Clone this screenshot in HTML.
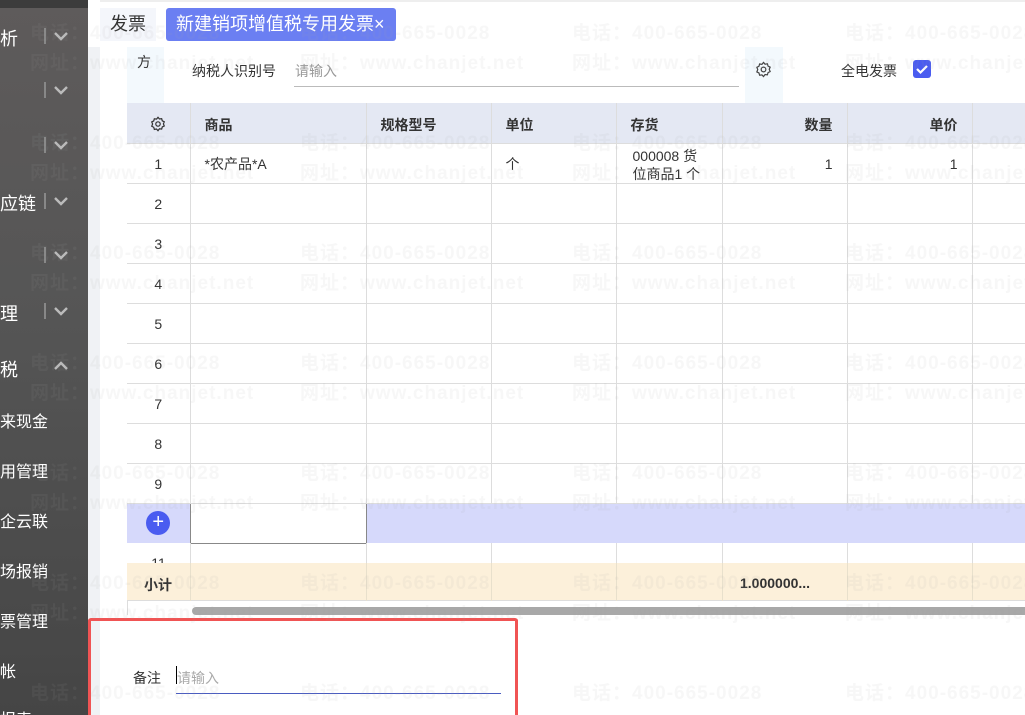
<!DOCTYPE html>
<html><head><meta charset="utf-8">
<style>
*{margin:0;padding:0;box-sizing:border-box}
html,body{width:1025px;height:715px;overflow:hidden}
body{background:#fff;font-family:"Liberation Sans","Noto Sans CJK SC",sans-serif;position:relative;font-size:14px;color:#333}
.side{position:absolute;left:0;top:0;width:88px;height:715px;background:linear-gradient(180deg,#5e5b5b 0%,#555 45%,#454545 100%)}
.side .top{position:absolute;left:0;top:0;width:88px;height:8px;background:#3c3c3c}
.si{position:absolute;left:0;color:#fff;font-size:18px}
.sep{position:absolute;left:44px;width:2px;height:16px;background:#888}
.chev{position:absolute;left:54px;width:14px;height:10px}
.strip{position:absolute;left:88px;top:47px;width:12px;height:668px;background:#f0f2f5}
.tab1{position:absolute;left:100px;top:8px;width:56px;height:33px;background:#f4f6fb;font-size:18px;color:#333;line-height:33px;text-align:center}
.tab2{position:absolute;left:166px;top:8px;width:230px;height:33px;background:#6b7ff2;border-radius:3px;color:#fff;font-size:18px;line-height:33px;padding-left:10px;white-space:nowrap}
.abs{position:absolute}
table{position:absolute;left:127px;top:103px;border-collapse:collapse;table-layout:fixed;width:905px}
td,th{border-right:1px solid #ddd;border-bottom:1px solid #ddd;height:40px;font-size:14px;padding:2px 14px 0;text-align:left;vertical-align:middle;overflow:hidden}
th{background:#e4e8f3;font-weight:bold;color:#333;padding-top:5px}
.wm{position:absolute;color:rgba(170,170,170,.09);font-size:19px;font-weight:bold;white-space:nowrap;letter-spacing:1px}
.vl{position:absolute;width:1px;background:#ddd}
</style></head><body>
<div class="side"><div class="top"></div>
<div class="si" style="top:25px">析</div><div class="sep" style="top:28px"></div>
<svg class="chev" style="top:31px" viewBox="0 0 14 10"><path d="M1 2l6 6 6-6" stroke="#bbb" stroke-width="2.4" fill="none"/></svg>
<div class="sep" style="top:82px"></div><svg class="chev" style="top:85px" viewBox="0 0 14 10"><path d="M1 2l6 6 6-6" stroke="#bbb" stroke-width="2.4" fill="none"/></svg>
<div class="sep" style="top:137px"></div><svg class="chev" style="top:140px" viewBox="0 0 14 10"><path d="M1 2l6 6 6-6" stroke="#bbb" stroke-width="2.4" fill="none"/></svg>
<div class="si" style="top:190px">应链</div><div class="sep" style="top:193px"></div><svg class="chev" style="top:196px" viewBox="0 0 14 10"><path d="M1 2l6 6 6-6" stroke="#bbb" stroke-width="2.4" fill="none"/></svg>
<div class="sep" style="top:247px"></div><svg class="chev" style="top:250px" viewBox="0 0 14 10"><path d="M1 2l6 6 6-6" stroke="#bbb" stroke-width="2.4" fill="none"/></svg>
<div class="si" style="top:300px">理</div><div class="sep" style="top:303px"></div><svg class="chev" style="top:306px" viewBox="0 0 14 10"><path d="M1 2l6 6 6-6" stroke="#bbb" stroke-width="2.4" fill="none"/></svg>
<div class="si" style="top:356px">税</div><svg class="chev" style="top:361px" viewBox="0 0 14 10"><path d="M1 8l6-6 6 6" stroke="#bbb" stroke-width="2.4" fill="none"/></svg>
<div class="si" style="top:408px;font-size:16px">来现金</div>
<div class="si" style="top:458px;font-size:16px">用管理</div>
<div class="si" style="top:508px;font-size:16px">企云联</div>
<div class="si" style="top:558px;font-size:16px">场报销</div>
<div class="si" style="top:608px;font-size:16px">票管理</div>
<div class="si" style="top:658px;font-size:16px">帐</div>
<div class="si" style="top:706px;font-size:16px">报表</div>
</div>
<div class="strip"></div>
<div class="abs" style="left:100px;top:0;width:925px;height:2px;background:#eee"></div>
<div class="tab1">发票</div>
<div class="tab2">新建销项增值税专用发票×</div>
<div class="abs" style="left:127px;top:47px;width:37px;height:56px;background:#f3f9fd"></div>
<div class="abs" style="left:137px;top:52px;font-size:14px">方</div>
<div class="abs" style="left:192px;top:61px;font-size:14px">纳税人识别号</div>
<div class="abs" style="left:295px;top:61px;font-size:14px;color:#999">请输入</div>
<div class="abs" style="left:294px;top:86px;width:445px;height:1px;background:#bbb"></div>
<div class="abs" style="left:745px;top:47px;width:38px;height:56px;background:#f3f9fd"></div>
<svg class="abs" style="left:755px;top:61px" width="17" height="17" viewBox="0 0 24 24"><path d="M12 2l2.2 2.5 3.3-.5.9 3.2 3 1.5-1.3 3.1 1.3 3.1-3 1.5-.9 3.2-3.3-.5L12 22l-2.2-2.4-3.3.5-.9-3.2-3-1.5L3.9 12 2.6 8.9l3-1.5.9-3.2 3.3.5z" fill="none" stroke="#444" stroke-width="1.7"/><circle cx="12" cy="12" r="3.3" fill="none" stroke="#444" stroke-width="1.7"/></svg>
<div class="abs" style="left:841px;top:61px;font-size:14px">全电发票</div>
<div class="abs" style="left:913px;top:60px;width:18px;height:18px;background:#4a5cf0;border-radius:3px"><svg width="18" height="18" viewBox="0 0 18 18"><path d="M4 9l3.5 3.5L14 6" stroke="#fff" stroke-width="2.2" fill="none"/></svg></div>
<table>
<colgroup><col style="width:63px"><col style="width:176px"><col style="width:125px"><col style="width:125px"><col style="width:106px"><col style="width:125px"><col style="width:125px"><col style="width:60px"></colgroup>
<tr><th style="text-align:center"><svg width="16" height="16" viewBox="0 0 24 24"><path d="M12 2l2.2 2.5 3.3-.5.9 3.2 3 1.5-1.3 3.1 1.3 3.1-3 1.5-.9 3.2-3.3-.5L12 22l-2.2-2.4-3.3.5-.9-3.2-3-1.5L3.9 12 2.6 8.9l3-1.5.9-3.2 3.3.5z" fill="none" stroke="#333" stroke-width="1.8"/><circle cx="12" cy="12" r="3.3" fill="none" stroke="#333" stroke-width="1.8"/></svg></th><th>商品</th><th>规格型号</th><th>单位</th><th>存货</th><th style="text-align:right">数量</th><th style="text-align:right">单价</th><th></th></tr>
<tr><td style="text-align:center">1</td><td>*农产品*A</td><td></td><td>个</td><td style="line-height:18px;padding:0 4px 0 16px;vertical-align:top"><div style="height:39px;overflow:hidden;padding-top:3px">000008 货<br>位商品1 个</div></td><td style="text-align:right">1</td><td style="text-align:right">1</td><td></td></tr>
<tr><td style="text-align:center">2</td><td></td><td></td><td></td><td></td><td></td><td></td><td></td></tr>
<tr><td style="text-align:center">3</td><td></td><td></td><td></td><td></td><td></td><td></td><td></td></tr>
<tr><td style="text-align:center">4</td><td></td><td></td><td></td><td></td><td></td><td></td><td></td></tr>
<tr><td style="text-align:center">5</td><td></td><td></td><td></td><td></td><td></td><td></td><td></td></tr>
<tr><td style="text-align:center">6</td><td></td><td></td><td></td><td></td><td></td><td></td><td></td></tr>
<tr><td style="text-align:center">7</td><td></td><td></td><td></td><td></td><td></td><td></td><td></td></tr>
<tr><td style="text-align:center">8</td><td></td><td></td><td></td><td></td><td></td><td></td><td></td></tr>
<tr><td style="text-align:center">9</td><td></td><td></td><td></td><td></td><td></td><td></td><td></td></tr>
<tr style="background:#d6d9fb"><td style="text-align:center;border:none;padding:0"><span style="display:inline-block;width:24px;height:24px;border-radius:50%;background:#4a5cf0;color:#fff;font-size:20px;line-height:23px">+</span></td><td style="background:#fff;border:1px solid #888"></td><td style="border:none"></td><td style="border:none"></td><td style="border:none"></td><td style="border:none"></td><td style="border:none"></td><td style="border:none"></td></tr>
</table>
<div class="abs" style="left:127px;top:543px;width:898px;height:20px;overflow:hidden">
<div class="abs" style="left:0;top:12px;width:63px;text-align:center;font-size:14px">11</div></div>
<div class="vl" style="left:190px;top:543px;height:58px"></div><div class="vl" style="left:366px;top:543px;height:58px"></div><div class="vl" style="left:491px;top:543px;height:58px"></div><div class="vl" style="left:616px;top:543px;height:58px"></div><div class="vl" style="left:722px;top:543px;height:58px"></div><div class="vl" style="left:847px;top:543px;height:58px"></div><div class="vl" style="left:972px;top:543px;height:58px"></div>
<div class="abs" style="left:127px;top:563px;width:898px;height:38px;background:rgba(252,239,216,0.95);border-bottom:1px solid #ddd"></div>
<div class="vl" style="left:190px;top:563px;height:38px;background:#e8e0cc"></div><div class="vl" style="left:366px;top:563px;height:38px;background:#e8e0cc"></div><div class="vl" style="left:491px;top:563px;height:38px;background:#e8e0cc"></div><div class="vl" style="left:616px;top:563px;height:38px;background:#e8e0cc"></div><div class="vl" style="left:722px;top:563px;height:38px;background:#e8e0cc"></div><div class="vl" style="left:847px;top:563px;height:38px;background:#e8e0cc"></div><div class="vl" style="left:972px;top:563px;height:38px;background:#e8e0cc"></div>
<div class="abs" style="left:144px;top:575px;font-weight:bold;font-size:14px">小计</div>
<div class="abs" style="left:740px;top:575px;font-weight:bold;font-size:14px">1.000000...</div>
<div class="abs" style="left:127px;top:601px;width:1px;height:14px;background:#ddd"></div>
<div class="abs" style="left:192px;top:607px;width:833px;height:8px;background:#a8a8a8;border-radius:4px 0 0 4px"></div>
<div class="abs" style="left:88px;top:618px;width:430px;height:100px;border:3px solid #f05454;border-bottom:none;border-radius:3px"></div>
<div class="abs" style="left:133px;top:668px;font-size:14px">备注</div>
<div class="abs" style="left:176px;top:666px;width:1px;height:18px;background:#000"></div>
<div class="abs" style="left:177px;top:668px;font-size:14px;color:#aaa">请输入</div>
<div class="abs" style="left:176px;top:693px;width:325px;height:1px;background:#4a5cc0"></div>
<div class="wm" style="left:30px;top:18px">电话：400-665-0028</div><div class="wm" style="left:300px;top:18px">电话：400-665-0028</div><div class="wm" style="left:572px;top:18px">电话：400-665-0028</div><div class="wm" style="left:845px;top:18px">电话：400-665-0028</div>
<div class="wm" style="left:30px;top:48px">网址：www.chanjet.net</div><div class="wm" style="left:300px;top:48px">网址：www.chanjet.net</div><div class="wm" style="left:572px;top:48px">网址：www.chanjet.net</div><div class="wm" style="left:845px;top:48px">网址：www.chanjet.net</div>
<div class="wm" style="left:30px;top:128px">电话：400-665-0028</div><div class="wm" style="left:300px;top:128px">电话：400-665-0028</div><div class="wm" style="left:572px;top:128px">电话：400-665-0028</div><div class="wm" style="left:845px;top:128px">电话：400-665-0028</div>
<div class="wm" style="left:30px;top:158px">网址：www.chanjet.net</div><div class="wm" style="left:300px;top:158px">网址：www.chanjet.net</div><div class="wm" style="left:572px;top:158px">网址：www.chanjet.net</div><div class="wm" style="left:845px;top:158px">网址：www.chanjet.net</div>
<div class="wm" style="left:30px;top:238px">电话：400-665-0028</div><div class="wm" style="left:300px;top:238px">电话：400-665-0028</div><div class="wm" style="left:572px;top:238px">电话：400-665-0028</div><div class="wm" style="left:845px;top:238px">电话：400-665-0028</div>
<div class="wm" style="left:30px;top:268px">网址：www.chanjet.net</div><div class="wm" style="left:300px;top:268px">网址：www.chanjet.net</div><div class="wm" style="left:572px;top:268px">网址：www.chanjet.net</div><div class="wm" style="left:845px;top:268px">网址：www.chanjet.net</div>
<div class="wm" style="left:30px;top:348px">电话：400-665-0028</div><div class="wm" style="left:300px;top:348px">电话：400-665-0028</div><div class="wm" style="left:572px;top:348px">电话：400-665-0028</div><div class="wm" style="left:845px;top:348px">电话：400-665-0028</div>
<div class="wm" style="left:30px;top:378px">网址：www.chanjet.net</div><div class="wm" style="left:300px;top:378px">网址：www.chanjet.net</div><div class="wm" style="left:572px;top:378px">网址：www.chanjet.net</div><div class="wm" style="left:845px;top:378px">网址：www.chanjet.net</div>
<div class="wm" style="left:30px;top:458px">电话：400-665-0028</div><div class="wm" style="left:300px;top:458px">电话：400-665-0028</div><div class="wm" style="left:572px;top:458px">电话：400-665-0028</div><div class="wm" style="left:845px;top:458px">电话：400-665-0028</div>
<div class="wm" style="left:30px;top:488px">网址：www.chanjet.net</div><div class="wm" style="left:300px;top:488px">网址：www.chanjet.net</div><div class="wm" style="left:572px;top:488px">网址：www.chanjet.net</div><div class="wm" style="left:845px;top:488px">网址：www.chanjet.net</div>
<div class="wm" style="left:30px;top:568px">电话：400-665-0028</div><div class="wm" style="left:300px;top:568px">电话：400-665-0028</div><div class="wm" style="left:572px;top:568px">电话：400-665-0028</div><div class="wm" style="left:845px;top:568px">电话：400-665-0028</div>
<div class="wm" style="left:30px;top:598px">网址：www.chanjet.net</div><div class="wm" style="left:300px;top:598px">网址：www.chanjet.net</div><div class="wm" style="left:572px;top:598px">网址：www.chanjet.net</div><div class="wm" style="left:845px;top:598px">网址：www.chanjet.net</div>
<div class="wm" style="left:30px;top:678px">电话：400-665-0028</div><div class="wm" style="left:300px;top:678px">电话：400-665-0028</div><div class="wm" style="left:572px;top:678px">电话：400-665-0028</div><div class="wm" style="left:845px;top:678px">电话：400-665-0028</div>
</body></html>
